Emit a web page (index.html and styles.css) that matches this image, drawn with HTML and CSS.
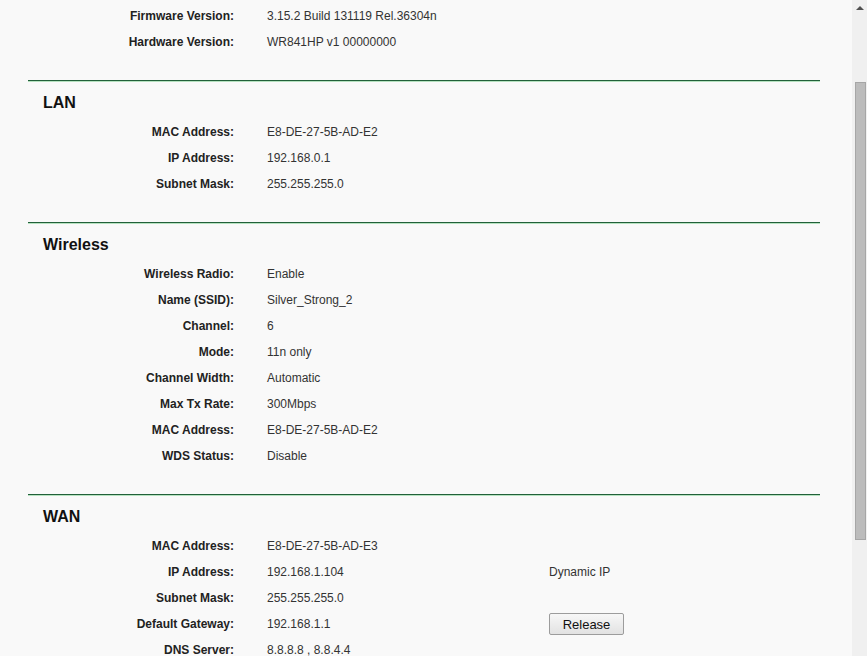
FILE: index.html
```html
<!DOCTYPE html>
<html lang="en">
<head>
  <meta charset="UTF-8">
  <title>Status</title>
  <link rel="stylesheet" href="styles.css">
</head>
<body>
  <div class="page">
    <div class="content">
      <!-- Version info (top of page, scrolled) -->
      <div class="rows rows-top">
        <div class="row"><span class="label">Firmware Version:</span><span class="value">3.15.2 Build 131119 Rel.36304n</span></div>
        <div class="row"><span class="label">Hardware Version:</span><span class="value">WR841HP v1 00000000</span></div>
      </div>

      <!-- LAN -->
      <div class="section">
        <div class="divider"></div>
        <h2>LAN</h2>
        <div class="rows">
          <div class="row"><span class="label">MAC Address:</span><span class="value">E8-DE-27-5B-AD-E2</span></div>
          <div class="row"><span class="label">IP Address:</span><span class="value">192.168.0.1</span></div>
          <div class="row"><span class="label">Subnet Mask:</span><span class="value">255.255.255.0</span></div>
        </div>
      </div>

      <!-- Wireless -->
      <div class="section">
        <div class="divider"></div>
        <h2>Wireless</h2>
        <div class="rows">
          <div class="row"><span class="label">Wireless Radio:</span><span class="value">Enable</span></div>
          <div class="row"><span class="label">Name (SSID):</span><span class="value">Silver_Strong_2</span></div>
          <div class="row"><span class="label">Channel:</span><span class="value">6</span></div>
          <div class="row"><span class="label">Mode:</span><span class="value">11n only</span></div>
          <div class="row"><span class="label">Channel Width:</span><span class="value">Automatic</span></div>
          <div class="row"><span class="label">Max Tx Rate:</span><span class="value">300Mbps</span></div>
          <div class="row"><span class="label">MAC Address:</span><span class="value">E8-DE-27-5B-AD-E2</span></div>
          <div class="row"><span class="label">WDS Status:</span><span class="value">Disable</span></div>
        </div>
      </div>

      <!-- WAN -->
      <div class="section">
        <div class="divider"></div>
        <h2>WAN</h2>
        <div class="rows">
          <div class="row"><span class="label">MAC Address:</span><span class="value">E8-DE-27-5B-AD-E3</span></div>
          <div class="row"><span class="label">IP Address:</span><span class="value">192.168.1.104</span><span class="extra">Dynamic IP</span></div>
          <div class="row"><span class="label">Subnet Mask:</span><span class="value">255.255.255.0</span></div>
          <div class="row"><span class="label">Default Gateway:</span><span class="value">192.168.1.1</span><span class="extra"><button class="btn">Release</button></span></div>
          <div class="row"><span class="label">DNS Server:</span><span class="value">8.8.8.8 , 8.8.4.4</span></div>
        </div>
      </div>
    </div>

    <!-- Scrollbar -->
    <div class="scrollbar">
      <div class="arrow-up"></div>
      <div class="thumb"></div>
    </div>
  </div>
</body>
</html>
```

FILE: styles.css
```css
html, body {
  margin: 0;
  padding: 0;
  height: 100%;
  overflow: hidden;
  background-color: #f9f9f9;
  font-family: "Liberation Sans", Arial, sans-serif;
  font-size: 12px;
  color: #333;
}

.page {
  display: flex;
  height: 656px;
}

/* Contenido principal */
.content {
  flex: 1;
  padding-left: 28px;
}

.rows-top {
  padding-top: 3px;
}

.section {
  width: 792px;
  margin-top: 25px;
}

/* Línea verde entre secciones */
.divider {
  height: 1px;
  background-color: #22603a;
  border-bottom: 1px solid #b6e2c0;
}

.section h2 {
  margin: 0 0 6px 0;
  padding: 11px 0 0 15px;
  font-size: 16px;
  line-height: 20px;
  font-weight: bold;
  color: #111;
}

.row {
  display: grid;
  grid-template-columns: 206px 282px auto;
  column-gap: 0;
  height: 26px;
  align-items: center;
}

.label {
  text-align: right;
  font-weight: bold;
  color: #222;
}

.value {
  padding-left: 33px;
  color: #333;
}

.extra {
  padding-left: 33px;
  color: #333;
}

/* Botón Release */
.btn {
  width: 75px;
  height: 22px;
  padding: 0;
  font-family: "Liberation Sans", Arial, sans-serif;
  font-size: 13px;
  color: #111;
  background: linear-gradient(#f7f7f7, #e2e2e2);
  border: 1px solid #9c9c9c;
  border-radius: 2px;
}

/* Barra de desplazamiento simulada */
.scrollbar {
  width: 15px;
  background-color: #f0f0f0;
  display: flex;
  flex-direction: column;
  align-items: center;
}

.arrow-up {
  width: 0;
  height: 0;
  margin-top: 6px;
  border-left: 4px solid transparent;
  border-right: 4px solid transparent;
  border-bottom: 4px solid #505050;
}

.thumb {
  width: 11px;
  height: 458px;
  margin-top: 72px;
  margin-left: 2px;
  background-color: #bcbcbc;
  border: 1px solid #a6a6a6;
  box-sizing: border-box;
}
```
